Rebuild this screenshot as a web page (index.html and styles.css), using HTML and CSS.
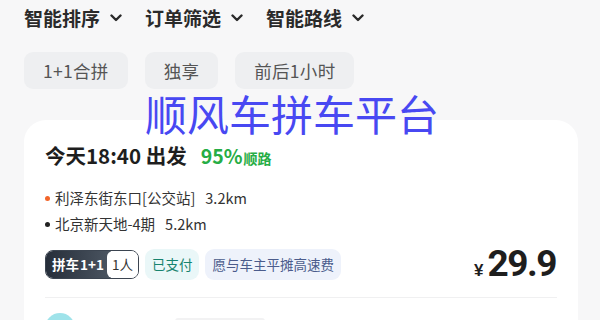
FILE: index.html
```html
<!DOCTYPE html>
<html lang="zh-CN">
<head>
<meta charset="utf-8">
<link rel="stylesheet" href="styles.css">
</head>
<body>
<div class="page">
  <div class="filters">
    <div class="filter"><span>智能排序</span><svg class="chev" viewBox="0 0 12 8"><path d="M1.5 1.5 L6 6 L10.5 1.5" /></svg></div>
    <div class="filter"><span>订单筛选</span><svg class="chev" viewBox="0 0 12 8"><path d="M1.5 1.5 L6 6 L10.5 1.5" /></svg></div>
    <div class="filter"><span>智能路线</span><svg class="chev" viewBox="0 0 12 8"><path d="M1.5 1.5 L6 6 L10.5 1.5" /></svg></div>
  </div>
  <div class="chips">
    <div class="chip">1+1合拼</div>
    <div class="chip">独享</div>
    <div class="chip">前后1小时</div>
  </div>
  <div class="card">
    <div class="title">今天18:40 出发<span class="match"><span class="pct">95%</span><span class="shun">顺路</span></span></div>
    <div class="addr"><span class="dot orange"></span>利泽东街东口[公交站]<span class="dist">3.2km</span></div>
    <div class="addr"><span class="dot black"></span>北京新天地-4期<span class="dist">5.2km</span></div>
    <div class="tags">
      <div class="pool"><span class="pool-l">拼车 1+1</span><span class="pool-r">1人</span></div>
      <div class="tag paid">已支付</div>
      <div class="tag share">愿与车主平摊高速费</div>
      <div class="price"><span class="yen">¥</span><span class="amt">29.9</span></div>
    </div>
    <div class="divider"></div>
    <div class="next">
      <div class="avatar"></div>
      <div class="bar"></div>
    </div>
  </div>
  <div class="watermark">顺风车拼车平台</div>
</div>
</body>
</html>
```
FILE: styles.css
```css
html, body {
  margin: 0;
  padding: 0;
}
body {
  background: #f7f7f8;
  font-family: "Noto Sans CJK SC", "Noto Sans", sans-serif;
  color: #222;
  width: 600px;
  height: 320px;
  overflow: hidden;
}
.page {
  position: relative;
}
.filters {
  display: flex;
  gap: 23px;
  padding: 4px 24px 0;
}
.filter {
  display: flex;
  align-items: center;
  gap: 10px;
  font-size: 19px;
  font-weight: 700;
  line-height: 28px;
  color: #2a2a2a;
}
.chev {
  width: 12px;
  height: 8px;
  fill: none;
  stroke: #2a2a2a;
  stroke-width: 2.4;
  stroke-linecap: round;
  stroke-linejoin: round;
}
.chips {
  display: flex;
  gap: 17px;
  padding: 0 24px;
  margin-top: 20px;
}
.chip {
  height: 37px;
  line-height: 37px;
  padding: 0 19px;
  background: #eeeff1;
  border-radius: 9px;
  font-size: 17.5px;
  letter-spacing: 0.3px;
  color: #555;
}
.card {
  margin: 31px 22px 0 24px;
  background: #fff;
  border-radius: 22px;
  padding: 20px 21px 0;
  height: 300px;
  box-sizing: border-box;
}
.title {
  font-size: 20.5px;
  font-weight: 700;
  line-height: 30px;
  color: #1e1e1e;
  display: flex;
  align-items: baseline;
}
.match {
  margin-left: 14px;
  color: #26ad45;
  display: flex;
  align-items: baseline;
}
.pct {
  font-size: 19.5px;
}
.shun {
  font-size: 14px;
  margin-left: 1px;
}
.addr {
  font-size: 14.5px;
  line-height: 26px;
  color: #333;
  display: flex;
  align-items: center;
}
.title + .addr {
  margin-top: 12px;
}
.dot {
  width: 5px;
  height: 5px;
  border-radius: 50%;
  margin-right: 5px;
}
.dot.orange { background: #f2652a; }
.dot.black { background: #222; }
.dist {
  margin-left: 10px;
}
.tags {
  display: flex;
  align-items: center;
  gap: 6px;
  margin-top: 12px;
  height: 31px;
}
.pool {
  display: flex;
  height: 29px;
  border: 1.5px solid #3b4450;
  border-radius: 8px;
  overflow: hidden;
  box-sizing: border-box;
}
.pool-l {
  background: linear-gradient(90deg, #262e3a, #4b5561);
  color: #fff;
  font-weight: 700;
  font-size: 13.5px;
  line-height: 26px;
  padding: 0 7px 0 6px;
  word-spacing: -2px;
}
.pool-r {
  background: #fff;
  color: #333;
  font-size: 13.5px;
  line-height: 26px;
  padding: 0 5px 0 5px;
  border-radius: 6px 0 0 6px;
  margin-left: -4px;
}
.tag {
  height: 31px;
  line-height: 31px;
  padding: 0 7px;
  border-radius: 9px;
  font-size: 13.5px;
}
.tag.paid {
  background: #eaf7f8;
  color: #17836f;
}
.tag.share {
  background: #eef2fb;
  color: #4b5c8c;
}
.price {
  margin-left: auto;
  margin-right: 1px;
  display: flex;
  align-items: baseline;
  color: #1e1e1e;
  font-weight: 700;
}
.yen {
  font-size: 17px;
  margin-right: 4px;
  font-family: "Liberation Sans", sans-serif;
}
.amt {
  font-family: "Liberation Sans Narrow", "Roboto", sans-serif;
  font-size: 37px;
  letter-spacing: -1.5px;
  line-height: 32px;
}
.divider {
  height: 1px;
  background: #f0f0f1;
  margin-top: 17px;
}
.next {
  display: flex;
  align-items: flex-start;
  margin-top: 15px;
}
.avatar {
  width: 30px;
  height: 30px;
  border-radius: 50%;
  background: linear-gradient(180deg, #9fe3ea 0 30%, #f08a3c 30%);
}
.bar {
  width: 90px;
  height: 10px;
  margin-left: 100px;
  margin-top: 5px;
  background: #f2f2f3;
  border-radius: 3px;
}
.watermark {
  position: absolute;
  left: 145px;
  top: 92px;
  font-size: 42px;
  line-height: 42px;
  color: #4848f2;
  font-weight: 400;
}
```
